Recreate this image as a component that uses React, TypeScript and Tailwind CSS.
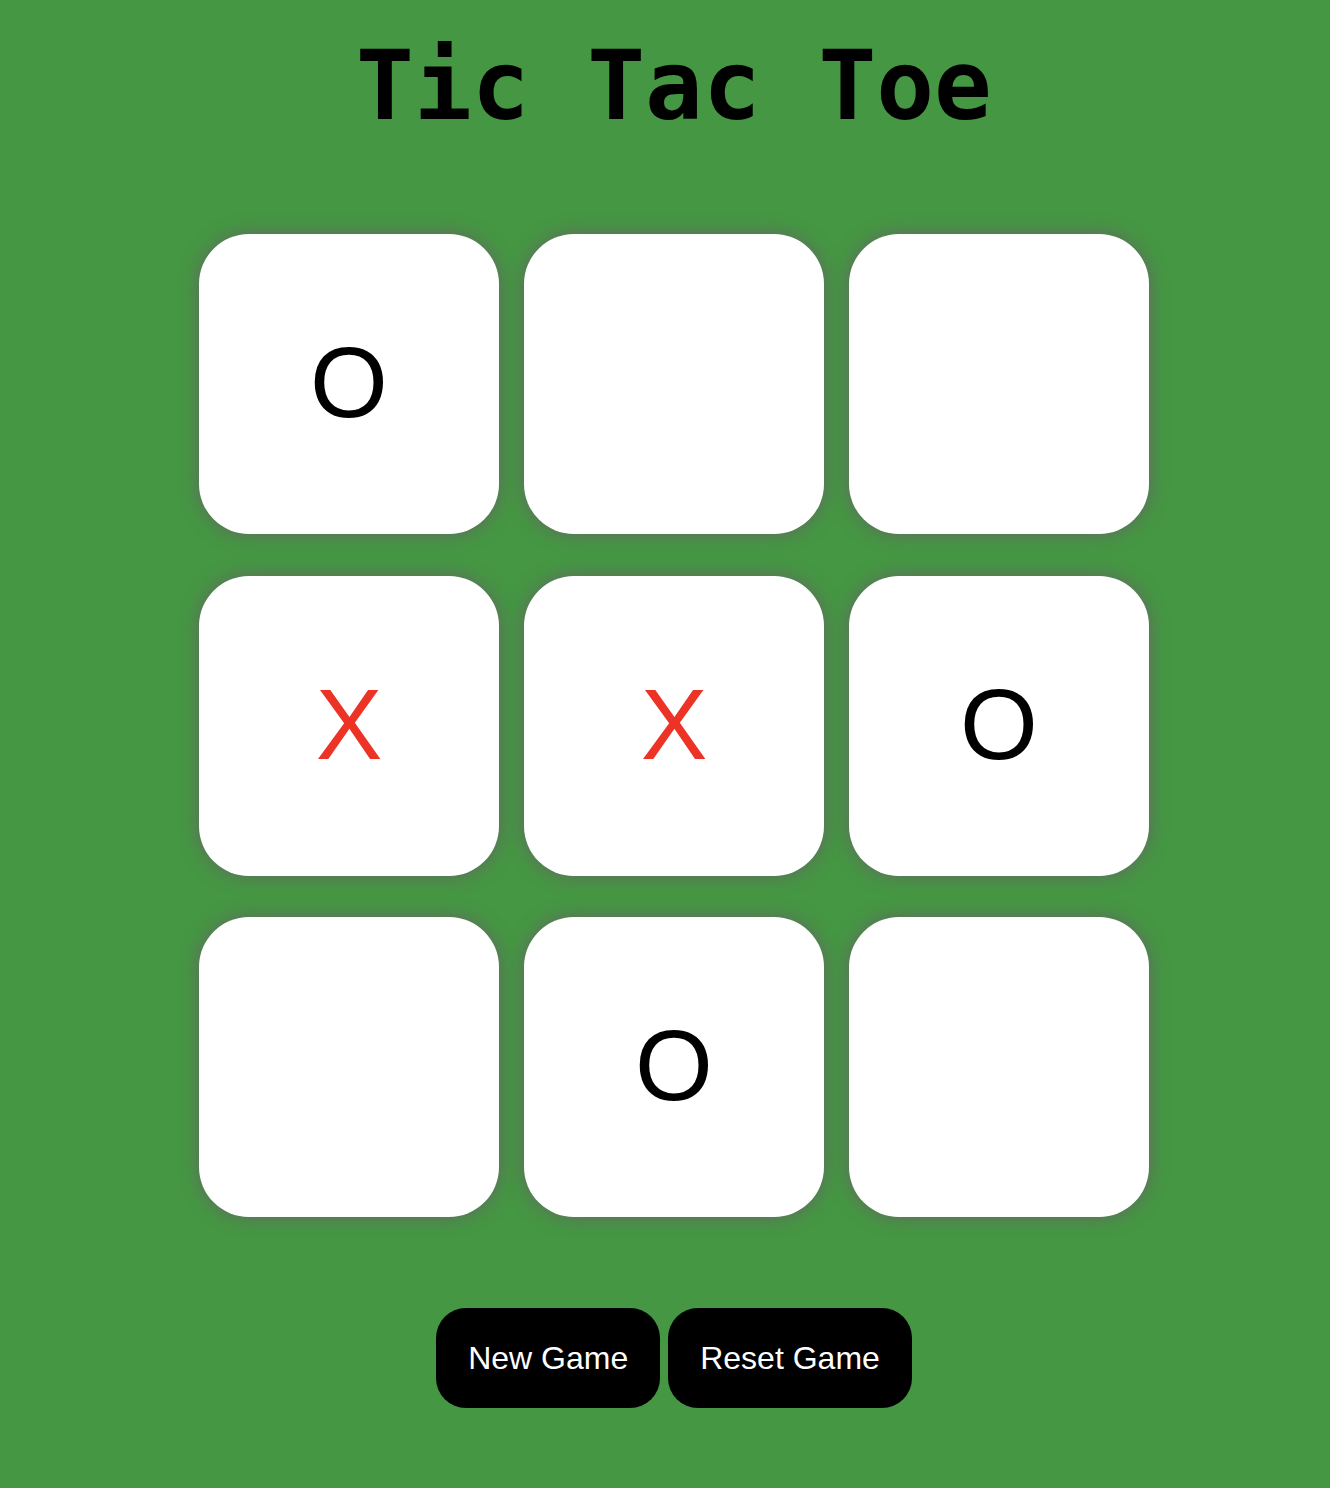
import { useState } from "react";

type Mark = "X" | "O" | null;

const startBoard: Mark[] = ["O", null, null, "X", "X", "O", null, "O", null];

export default function App() {
  const [board, setBoard] = useState<Mark[]>(startBoard);
  const [turn, setTurn] = useState<"X" | "O">("X");

  const play = (i: number) => {
    if (board[i]) return;
    setBoard((prev) => prev.map((m, j) => (j === i ? turn : m)));
    setTurn((t) => (t === "X" ? "O" : "X"));
  };

  const newGame = () => {
    setBoard(Array(9).fill(null));
    setTurn("X");
  };

  return (
    <main className="min-h-[1488px] bg-[#459743] pl-[18px] pt-[38px]">
      <h1 className="text-center font-['DejaVu_Sans_Mono',monospace] text-8xl font-bold leading-none text-black">
        Tic Tac Toe
      </h1>

      {/* board */}
      <div className="mx-auto mt-[100px] grid w-[950px] grid-cols-3 gap-x-[25px] gap-y-[41.5px]">
        {board.map((mark, i) => (
          <button
            key={i}
            type="button"
            onClick={() => play(i)}
            className="flex h-[300px] w-[300px] items-center justify-center rounded-[50px] bg-white pb-[4px] font-['Liberation_Sans',Arial,sans-serif] text-[100px] leading-none shadow-[0_0_18px_rgba(100,100,100,0.95)]"
          >
            <span className={mark === "X" ? "text-[#ec3325]" : "text-black"}>{mark}</span>
          </button>
        ))}
      </div>

      {/* buttons */}
      <div className="mt-[91px] flex justify-center gap-2">
        <button
          type="button"
          onClick={newGame}
          className="h-[100px] rounded-[30px] bg-black px-8 font-['Liberation_Sans',Arial,sans-serif] text-[32px] text-white"
        >
          New Game
        </button>
        <button
          type="button"
          onClick={() => {
            setBoard(startBoard);
            setTurn("X");
          }}
          className="h-[100px] rounded-[30px] bg-black px-8 font-['Liberation_Sans',Arial,sans-serif] text-[32px] text-white"
        >
          Reset Game
        </button>
      </div>
    </main>
  );
}
